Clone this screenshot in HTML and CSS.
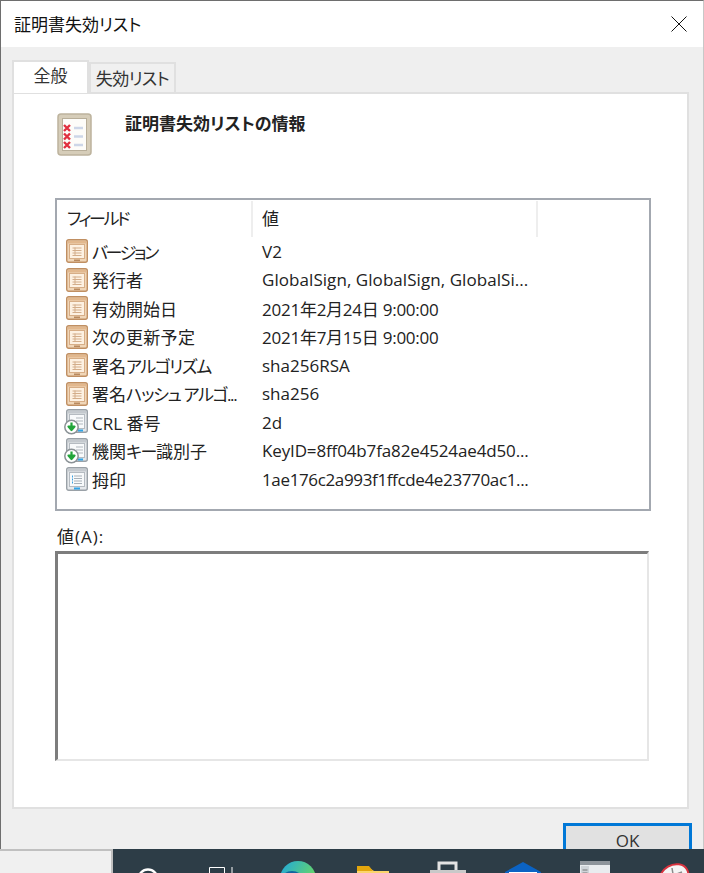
FILE: index.html
```html
<!DOCTYPE html>
<html lang="ja">
<head>
<meta charset="utf-8">
<title>証明書失効リスト</title>
<link rel="stylesheet" href="styles.css">
</head>
<body>
<svg class="defs" width="0" height="0" aria-hidden="true">
  <symbol id="f-orange" viewBox="0 0 22 24">
    <rect x=".7" y=".7" width="20.600" height="22.600" rx="2" fill="#f0d6b8" stroke="#c08f62" stroke-width="1.400"/>
    <rect x="2" y="2" width="18" height="2.500" fill="#e2b88e"/>
    <rect x="3.500" y="5.500" width="15" height="14" fill="#fdf1e2" stroke="#d7ae87"/>
    <path d="M6.500 9h9M6.500 11.500h9M6.500 14h9M6.500 16.500h9" stroke="#d3ad8a" stroke-width="1"/>
    <path d="M9 8.500v8.500" stroke="#d3ad8a"/>
    <rect x="8" y="20.500" width="6" height="1.600" fill="#b98a5f"/>
  </symbol>
  <symbol id="f-gray" viewBox="0 0 22 24">
    <rect x=".7" y=".7" width="20.600" height="22.600" rx="2" fill="#e6e9ec" stroke="#9aa1a7" stroke-width="1.400"/>
    <rect x="2" y="2" width="18" height="2.500" fill="#c4c9ce"/>
    <rect x="3.500" y="5.500" width="15" height="14" fill="#f8fafb" stroke="#b5bbc1"/>
    <path d="M8 9h8M8 11.500h8M8 14h8M8 16.500h8" stroke="#a7b0b8" stroke-width="1"/>
    <path d="M6.500 8.500v8.500" stroke="#3aa0e0" stroke-dasharray="2 1"/>
    <rect x="8" y="20.500" width="6" height="2" fill="#2fa4e7"/>
  </symbol>
  <symbol id="f-down" viewBox="0 0 24 26">
    <rect x="2.700" y=".7" width="20.600" height="22.600" rx="2" fill="#e3e6e9" stroke="#9aa1a7" stroke-width="1.400"/>
    <rect x="4" y="2" width="18" height="2.500" fill="#c4c9ce"/>
    <rect x="5.500" y="5.500" width="15" height="14" fill="#f8fafb" stroke="#b5bbc1"/>
    <path d="M12 9h7M12 12h7M12 15h7" stroke="#b0b7bd" stroke-width="1"/>
    <rect x="14" y="20.500" width="5" height="2" fill="#2fa4e7"/>
    <circle cx="7.500" cy="18" r="6.700" fill="#fff" stroke="#8b9296" stroke-width="1.500"/>
    <path d="M7.500 13.500v5M4.500 17.500l3 3.500 3-3.500z" stroke="#22a53a" stroke-width="2.200" fill="#22a53a" stroke-linejoin="round"/>
  </symbol>
</svg>

<div class="window">
  <header class="titlebar">
    <span class="title">証明書失効リスト</span>
    <svg class="close" viewBox="0 0 16 16" width="16" height="16"><path d="M.5.5l15 15M15.500.5l-15 15" stroke="#111" fill="none"/></svg>
  </header>

  <div class="client">
    <div class="tabs">
      <div class="tab tab-active">全般</div>
      <div class="tab tab-narrow">失効リスト</div>
    </div>

    <section class="panel">
      <div class="heading">
        <svg class="cert" viewBox="0 0 35 43" width="35" height="43">
          <rect x="1" y="1" width="33" height="41" rx="3" fill="#d6cdb9" stroke="#bdb39d" stroke-width="1.500"/>
          <rect x="5.500" y="5.500" width="24" height="32" fill="#fdfcf9" stroke="#b8ae99"/>
          <path d="M7 12l6 6M13 12l-6 6M7 20.500l6 6M13 20.500l-6 6M7 29l6 6M13 29l-6 6" stroke="#e0303f" stroke-width="2.400"/>
          <path d="M17 15h9M17 23.500h9M17 32h9" stroke="#cdd6e8" stroke-width="2.400"/>
        </svg>
        <h1 class="heading-text">証明書失効リストの情報</h1>
      </div>

      <div class="listbox">
        <div class="list-head">
          <div class="col-field"><span class="kana-tight">フィールド</span></div>
          <div class="col-value">値</div>
        </div>
        <div class="row"><svg class="ico"><use href="#f-orange"/></svg><span class="name"><span class="kana-tight">バージョン</span></span><span class="val">V2</span></div>
        <div class="row"><svg class="ico"><use href="#f-orange"/></svg><span class="name">発行者</span><span class="val val-wide">GlobalSign, GlobalSign, GlobalSi...</span></div>
        <div class="row"><svg class="ico"><use href="#f-orange"/></svg><span class="name">有効開始日</span><span class="val val-date">2021年2月24日 9:00:00</span></div>
        <div class="row"><svg class="ico"><use href="#f-orange"/></svg><span class="name name-wide">次の更新予定</span><span class="val val-date">2021年7月15日 9:00:00</span></div>
        <div class="row"><svg class="ico"><use href="#f-orange"/></svg><span class="name">署名<span class="kana-mid">アルゴリズム</span></span><span class="val">sha256RSA</span></div>
        <div class="row"><svg class="ico"><use href="#f-orange"/></svg><span class="name">署名<span class="kana-mid">ハッシュ アルゴ...</span></span><span class="val">sha256</span></div>
        <div class="row"><svg class="ico ico-down"><use href="#f-down"/></svg><span class="name">CRL 番号</span><span class="val">2d</span></div>
        <div class="row"><svg class="ico ico-down"><use href="#f-down"/></svg><span class="name">機関<span class="kana-mid">キー</span>識別子</span><span class="val val-key">KeyID=8ff04b7fa82e4524ae4d50...</span></div>
        <div class="row"><svg class="ico"><use href="#f-gray"/></svg><span class="name">拇印</span><span class="val val-hash">1ae176c2a993f1ffcde4e23770ac1...</span></div>
      </div>

      <label class="value-label">値(A):</label>
      <div class="value-box"></div>
    </section>

    <div class="footer"><button class="ok">OK</button></div>
  </div>
</div>

<div class="desk-corner"></div>
<footer class="taskbar">
  <svg class="tb tb-search" viewBox="0 0 24 24" width="24" height="24"><circle cx="12" cy="12" r="9.500" fill="none" stroke="#fff" stroke-width="2.400"/></svg>
  <svg class="tb tb-view" viewBox="0 0 24 24" width="24" height="24"><path d="M.5 6V.5h15V6M23 0v24" fill="none" stroke="#fff"/></svg>
  <svg class="tb tb-edge" viewBox="0 0 36 36" width="36" height="36"><defs><linearGradient id="eg" x1="0" y1="0" x2="1" y2=".6"><stop offset="0" stop-color="#1ea6e0"/><stop offset="1" stop-color="#6fdc5a"/></linearGradient></defs><circle cx="18" cy="18" r="18" fill="url(#eg)"/><ellipse cx="12" cy="17" rx="10" ry="7" fill="#11659f"/></svg>
  <svg class="tb tb-folder" viewBox="0 0 32 24" width="32" height="24"><path d="M0 3h14l3 2h15v19H0z" fill="#fbd56b"/><path d="M0 0h12l4 5H0z" fill="#e3a60d"/></svg>
  <svg class="tb tb-store" viewBox="0 0 36 36" width="36" height="36"><path d="M9 9V2h17v7" fill="none" stroke="#e3e3e3" stroke-width="3"/><rect y="9" width="36" height="27" fill="#c9c9c9"/></svg>
  <svg class="tb tb-mail" viewBox="0 0 36 36" width="36" height="36"><path d="M0 10L18 0l18 10v26H0z" fill="#0b63c4"/><rect x="4" y="10" width="28" height="26" fill="#fff"/></svg>
  <svg class="tb tb-win" viewBox="0 0 30 36" width="30" height="36"><rect width="30" height="36" fill="#e9ecef"/><rect width="30" height="4" fill="#8d949b"/><rect x="1" y="5" width="8" height="30" fill="#cfd4d9"/><path d="M2.500 9h5M2.500 12h5" stroke="#777"/></svg>
  <svg class="tb tb-clock" viewBox="0 0 32 36" width="32" height="36"><ellipse cx="16" cy="15" rx="15" ry="12" transform="rotate(-30 16 15)" fill="#f5f5f5" stroke="#d9333f" stroke-width="2"/><path d="M14 6l2 12M8 16l16-6" stroke="#8a8a8a" stroke-width="1.500"/></svg>
</footer>
</body>
</html>
```

FILE: styles.css
```css
* { box-sizing: border-box; }
html, body { margin: 0; padding: 0; height: 873px; overflow: hidden; }
body {
  position: relative;
  background: #f0f0f0;
  color: #222;
  font-family: "Open Sans", "Noto Sans CJK JP", sans-serif;
  font-size: 17px;
  font-feature-settings: "palt";
}
.defs { position: absolute; }

.window {
  height: 873px;
  display: flex;
  flex-direction: column;
  border-top: 1px solid #6e6e6e;
  border-left: 1px solid #6e6e6e;
  border-right: 1px solid #c8c8c8;
}
.titlebar {
  height: 46px;
  flex: none;
  background: #fff;
  display: flex;
  align-items: center;
  justify-content: space-between;
  padding: 0 16px 1px 13px;
}
.title { color: #111; }
.close { display: block; }

.client {
  flex: 1;
  background: #efefef;
  padding: 13px 14px 0 11px;
}
.tabs { display: flex; align-items: flex-end; height: 32px; position: relative; z-index: 1; }
.tab {
  height: 30px;
  width: 87px;
  border: 2px solid #e0e0e0;
  border-bottom: 0;
  background: #f0f0f0;
  text-align: center;
  line-height: 29px;
  color: #333;
}
.tab-narrow { letter-spacing: -.6px; }
.tab-active {
  width: 77px;
  height: 33px;
  margin-bottom: -1px;
  background: #fff;
  line-height: 27px;
}
.panel {
  height: 717px;
  background: #fff;
  border: 2px solid #e0e0e0;
  padding: 19px 38px 0 41px;
}
.heading { display: flex; height: 85px; }
.cert { display: block; margin: 0 0 0 2px; }
.heading-text {
  margin: 0 0 0 33px;
  font-size: 17px;
  font-weight: 700;
  line-height: 22px;
  color: #222;
}
.listbox {
  height: 313px;
  width: 596px;
  border: 2px solid #a3a8b0;
}
.list-head { display: flex; height: 37px; color: #222; }
.col-field { width: 196px; padding-left: 10px; border-right: 2px solid #eee; margin-top: 1px; line-height: 36px; }
.col-value { width: 285px; padding-left: 9px; border-right: 2px solid #eee; margin-top: 1px; line-height: 36px; }
.row {
  display: flex;
  align-items: center;
  height: 28.500px;
  padding-left: 9px;
  white-space: nowrap;
  color: #222;
}
.ico { width: 22px; height: 24px; flex: none; }
.ico-down { width: 24px; height: 26px; margin: 0 0 0 -2px; }
.name { width: 174px; padding-left: 4px; flex: none; }
.name-wide { letter-spacing: .3px; }
.kana-tight { letter-spacing: -2.400px; }
.kana-mid { letter-spacing: -1.300px; }
.val { color: #222; }
.val-wide { letter-spacing: .06px; }
.val-date { letter-spacing: -.25px; }
.val-key { letter-spacing: -.14px; }
.val-hash { letter-spacing: -.36px; }
.value-label { display: block; margin: 14px 0 0 2px; height: 26px; line-height: 24px; color: #222; letter-spacing: 1px; }
.value-box {
  width: 594px;
  height: 210px;
  background: #fff;
  border-style: solid;
  border-color: #7d7d7d #e6e6e6 #e6e6e6 #7d7d7d;
  border-width: 3px 2px 2px 3px;
}
.footer { display: flex; justify-content: flex-end; padding: 14px 0 0; margin-right: -3px; }
.ok {
  width: 129px;
  height: 40px;
  background: #e1e1e1;
  border: 3px solid #0078d7;
  padding: 0 0 6px;
  font: inherit;
  color: #333;
}

.desk-corner {
  position: absolute;
  left: 0; top: 849px;
  width: 113px; height: 24px;
  background: #f0f0f0;
  border-top: 2px solid #c0c0c0;
  border-right: 2px solid #c0c0c0;
}
.taskbar {
  position: absolute;
  left: 113px; right: 0; top: 849px; height: 24px;
  background: #2d3d47;
  overflow: hidden;
}
.tb { position: absolute; display: block; }
.tb-search { left: 23px; top: 18px; }
.tb-view { left: 96px; top: 18px; }
.tb-edge { left: 167px; top: 12px; }
.tb-folder { left: 244px; top: 17px; }
.tb-store { left: 317px; top: 12px; }
.tb-mail { left: 392px; top: 13px; }
.tb-win { left: 467px; top: 12px; }
.tb-clock { left: 545px; top: 13px; }
```
